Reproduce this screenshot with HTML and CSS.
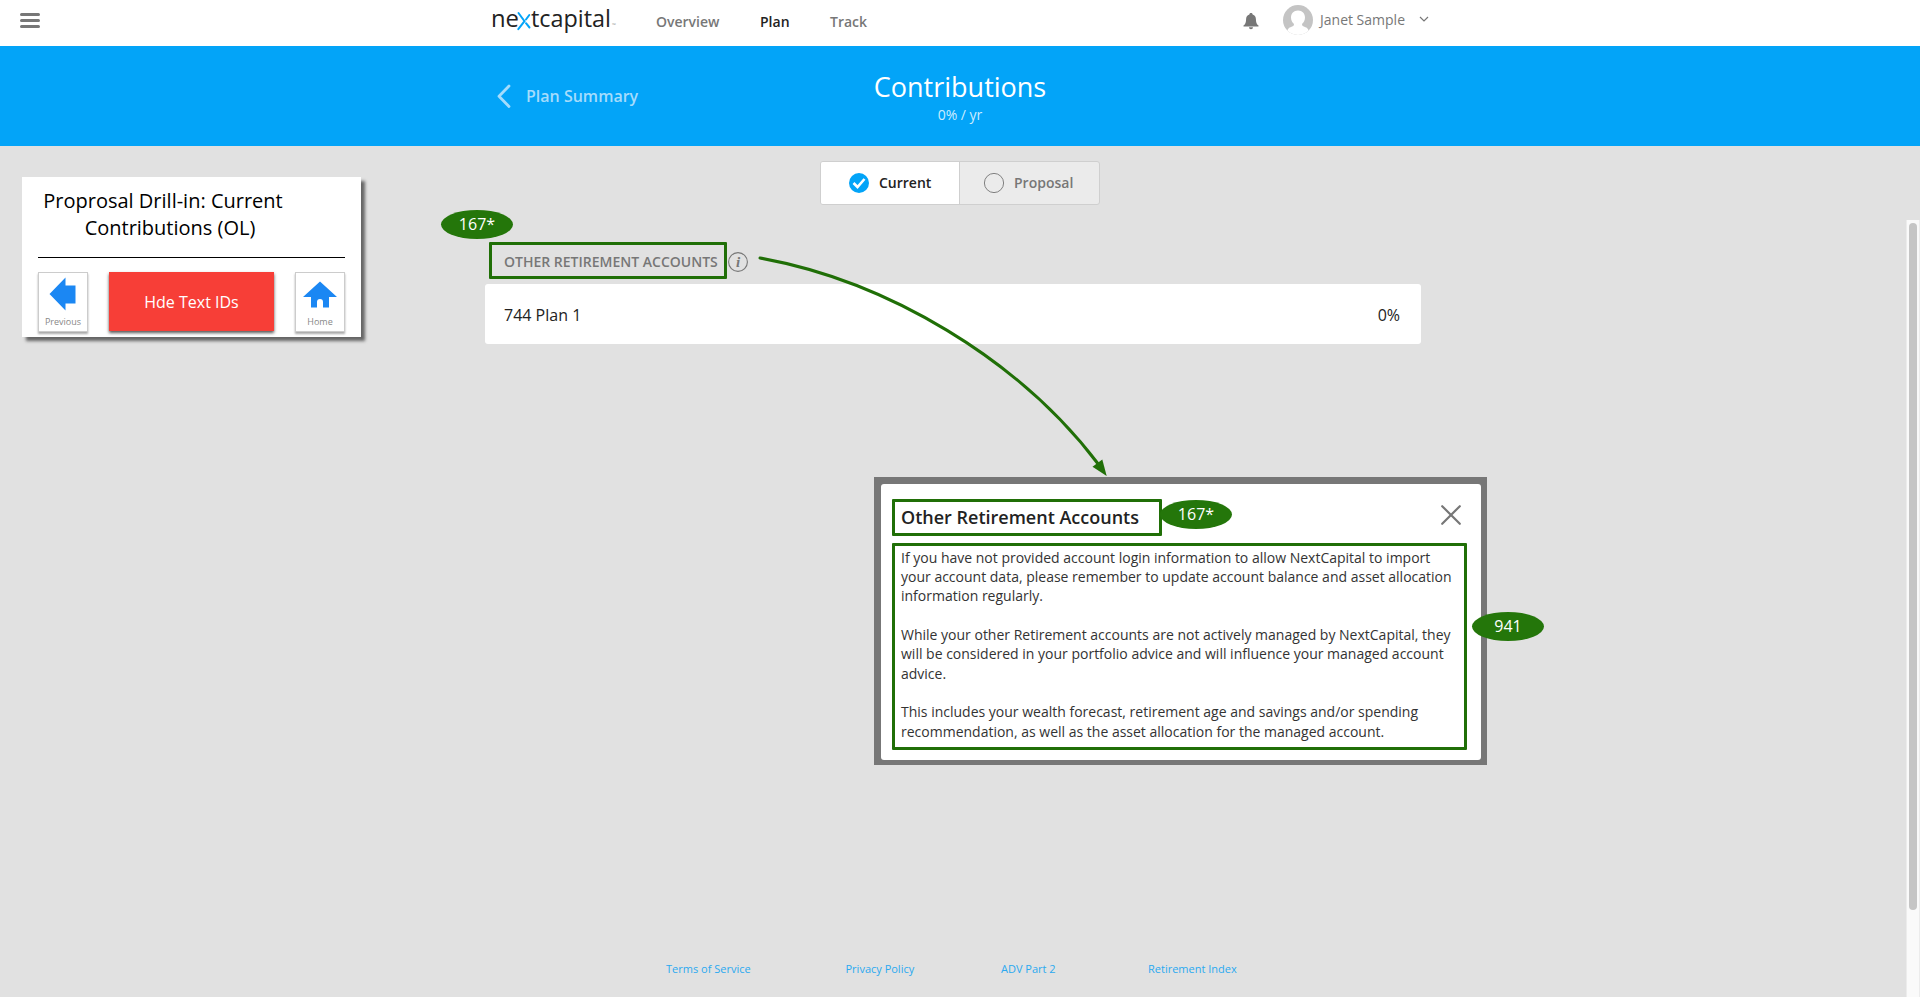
FILE: index.html
```
<!DOCTYPE html>
<html lang="en">
<head>
<meta charset="utf-8">
<title>Contributions</title>
<link rel="stylesheet" href="styles.css">
</head>
<body>
<div class="page">
  <header class="topbar">
    <svg class="menu" width="20" height="16" viewBox="0 0 20 16"><path d="M1.500 1.500h17M1.500 7.500h17M1.500 13.500h17" stroke="#777" stroke-width="3" stroke-linecap="round"/></svg>
    <svg class="logo" width="126" height="42" viewBox="0 -5 126 42">
      <text x="0" y="20" textLength="28" lengthAdjust="spacingAndGlyphs">ne</text>
      <path d="M27.500 6l6 8.200l-6.200 8M38.300 8l-3.300 4.500M38.500 20.500l-3.500-4.300" fill="none" stroke="#03a4f8" stroke-width="2" stroke-linecap="round"/>
      <text x="40" y="20" textLength="80" lengthAdjust="spacingAndGlyphs">tcapital</text>
      <text x="121" y="20" class="tm">™</text>
    </svg>
    <nav class="nav"><a class="n1">Overview</a><a class="n2 active">Plan</a><a class="n3">Track</a></nav>
    <div class="user">
      <svg class="bell" width="16" height="17" viewBox="0 0 16 17"><path d="M8 0c1 0 1.600.6 1.600 1.400C12 2 12.800 4 12.900 6c.1 3.500.6 5.300 2.600 6.600v1H.5v-1C2.500 11.300 3 9.500 3.100 6 3.200 4 4 2 6.400 1.400 6.400.6 7 0 8 0zM6 14.300h4c0 1.200-.8 2-2 2s-2-.8-2-2z" fill="#777"/></svg>
      <svg class="avatar" width="30" height="30" viewBox="0 0 30 30"><defs><clipPath id="face"><circle cx="15" cy="15" r="15"/></clipPath></defs><g clip-path="url(#face)"><path d="M0 0h30v30H0z" fill="#c4c4c4"/><path d="M15 5.500c4.300 0 7 3 7 7 0 3-1.300 5-3 6.500 0 2 1 2.300 3.500 3.200 2.300.8 3.500 2.500 4.200 7.800H3.300c.7-5.300 1.900-7 4.200-7.800C10 21.300 11 21 11 19c-1.700-1.500-3-3.500-3-6.500 0-4 2.700-7 7-7z" fill="#fff"/></g></svg>
      <span class="name">Janet Sample</span>
      <svg class="caret" width="10" height="6" viewBox="0 0 10 6"><path d="M1 1l4 4 4-4" fill="none" stroke="#777" stroke-width="1.200"/></svg>
    </div>
  </header>

  <section class="hero">
    <a class="back"><svg width="15" height="25" viewBox="0 0 15 25"><path d="M13 2L3 12.300l10 10.200" fill="none" stroke="#a5dcfc" stroke-width="2.800" stroke-linecap="round" stroke-linejoin="round"/></svg><span>Plan Summary</span></a>
    <div class="heading"><h1>Contributions</h1><p>0% / yr</p></div>
  </section>

  <main class="main">
    <div class="toggle">
      <div class="option on"><svg width="22" height="22" viewBox="0 0 22 22"><circle cx="11" cy="11" r="10" fill="#03a4f8"/><path d="M5.500 11l4 4 7-8" fill="none" stroke="#fff" stroke-width="2.600"/></svg><span>Current</span></div>
      <div class="option"><svg width="22" height="22" viewBox="0 0 22 22"><circle cx="11" cy="11" r="9.600" fill="none" stroke="#808080"/></svg><span>Proposal</span></div>
    </div>
    <div class="section-head"><h2 class="marked">OTHER RETIREMENT ACCOUNTS</h2><svg width="20" height="20" viewBox="0 0 20 20"><circle cx="10" cy="10" r="9.400" fill="none" stroke="#777" stroke-width="1.100"/><text x="10" y="15" text-anchor="middle" class="info-i">i</text></svg></div>
    <div class="card"><span>744 Plan 1</span><span>0%</span></div>
    <footer class="footer"><a class="f1">Terms of Service</a><a class="f2">Privacy Policy</a><a class="f3">ADV Part 2</a><a>Retirement Index</a></footer>
  </main>

  <div class="scroll"><div class="thumb"></div></div>

  <aside class="panel">
    <h3>Proprosal Drill-in: Current<br><span class="line-two">Contributions (OL)</span></h3>
    <div class="panel-row">
      <div class="tile"><svg width="50" height="42" viewBox="0 0 50 42"><path d="M11.500 21L27.500 4.500v8h10v18H27.500v7z" fill="#1b87f3"/></svg><span>Previous</span></div>
      <div class="toggle-ids">Hde Text IDs</div>
      <div class="tile"><svg width="50" height="42" viewBox="0 0 50 42"><path d="M25 8.500L42 24H34v10.500H28v-5.500a3 3 0 0 0-6 0v5.500H16V24H8z" fill="#1b87f3"/></svg><span>Home</span></div>
    </div>
  </aside>

  <div class="modal">
    <div class="dialog">
      <div class="dialog-head"><h2>Other Retirement Accounts</h2><svg width="20" height="20" viewBox="0 0 20 20"><path d="M1.200 1.200l17.600 17.600M18.800 1.200L1.200 18.800" stroke="#777" stroke-width="2.200" stroke-linecap="round"/></svg></div>
      <div class="dialog-body">
        <p>If you have not provided account login information to allow NextCapital to import<br>your account data, please remember to update account balance and asset allocation<br>information regularly.</p>
        <p>While your other Retirement accounts are not actively managed by NextCapital, they<br>will be considered in your portfolio advice and will influence your managed account<br>advice.</p>
        <p>This includes your wealth forecast, retirement age and savings and/or spending<br>recommendation, as well as the asset allocation for the managed account.</p>
      </div>
    </div>
  </div>

  <svg class="arrow" width="360" height="230" viewBox="0 0 360 230"><path d="M3 5C130 28 262 106 342 212" fill="none" stroke="#206f07" stroke-width="3" stroke-linecap="round"/><path d="M349.700 223L335.500 213.700l9.800-7.200z" fill="#206f07"/></svg>
  <div class="tag tag-a">167*</div>
  <div class="tag tag-b">167*</div>
  <div class="tag tag-c">941</div>
</div>
</body>
</html>
```
FILE: styles.css
```
* { box-sizing: border-box; }
body { margin: 0; background: #fff; font-family: "Open Sans", "Noto Sans", sans-serif; color: #222; overflow: hidden; }
h1, h2, h3, p { margin: 0; }
svg { display: block; flex: none; }
.page { position: relative; width: 1920px; height: 997px; background: #e1e1e1; display: flex; flex-direction: column; white-space: nowrap; }

.topbar { height: 46px; background: #fff; display: flex; align-items: flex-start; flex: none; }
.menu { margin: 13px 0 0 20px; }
.logo { margin: 2px 0 0 451px; font-family: "Open Sans", sans-serif; font-size: 24.500px; fill: #222; }
.logo .tm { font-size: 5px; fill: #999; }
.nav { display: flex; margin: 12px 0 0 39px; font-size: 14px; line-height: 20px; font-weight: 600; color: #777; }
.nav .active { color: #222; }
.n1 { width: 104px; }
.n2 { width: 70px; }
.n3 { width: 60px; }
.user { display: flex; margin-left: 353px; font-size: 14px; line-height: 20px; color: #777; }
.bell { margin-top: 13px; }
.avatar { margin: 5px 0 0 24px; }
.name { width: 86px; margin: 10px 0 0 7px; }
.caret { margin: 16px 0 0 13px; }

.hero { height: 100px; background: #03a4f8; flex: none; display: flex; color: #fff; }
.back { display: flex; align-items: center; width: 379px; margin-left: 496px; height: 100px; color: #a5dcfc; font-size: 16px; font-weight: 600; }
.back span { margin-left: 15px; }
.heading { width: 170px; display: flex; flex-direction: column; align-items: center; }
.heading h1 { font-size: 27px; line-height: 38px; font-weight: 400; margin-top: 22px; }
.heading p { font-size: 14px; line-height: 18px; color: #cdecfe; }

.main { flex: 1; display: flex; flex-direction: column; padding-top: 15px; }
.toggle { margin-left: 820px; width: 280px; height: 44px; display: flex; border: 1px solid #cfcfcf; border-radius: 3px; background: #ebebeb; overflow: hidden; font-size: 14px; line-height: 20px; font-weight: 600; color: #777; }
.option { width: 139px; display: flex; align-items: center; padding-left: 23px; }
.option span { margin: 0 0 1px 9px; }
.option.on { width: 139px; padding-left: 27px; background: #fff; border-right: 1px solid #cfcfcf; color: #222; }
.section-head { display: flex; align-items: center; gap: 1px; margin: 37px 0 0 489px; }
.section-head svg { margin-top: 2px; }
.marked { width: 238px; height: 37px; border: 3px solid #206f07; border-radius: 1px; padding-left: 12px; font-size: 14px; line-height: 33px; font-weight: 600; color: #777; }
.info-i { font: italic bold 15px "Liberation Serif", serif; fill: #777; }
.card { margin: 5px 0 0 485px; width: 936px; height: 60px; border-radius: 3px; background: #fff; display: flex; align-items: center; justify-content: space-between; padding: 2px 21px 0 19px; font-size: 16px; }
.footer { display: flex; margin: auto 0 20px 666px; font-size: 11px; line-height: 16px; color: #2ba9f0; }
.f1 { width: 179.500px; }
.f2 { width: 155.500px; }
.f3 { width: 147px; }

.scroll { position: absolute; left: 1906px; top: 220px; width: 14px; height: 777px; background: #fafafa; border-left: 1px solid #ececec; border-right: 1px solid #ececec; padding: 3px 2px 0; }
.thumb { width: 8px; height: 687px; border-radius: 4px; background: #c5c5c5; }

.panel { position: absolute; left: 22px; top: 177px; width: 339px; height: 160px; background: #fff; box-shadow: 4px 4px 3px #666; padding: 10px 16px 0; color: #000; }
.panel h3 { font-size: 20px; line-height: 27px; font-weight: 400; text-align: center; padding-right: 57px; height: 71px; width: 307px; border-bottom: 1px solid #000; }
.line-two { padding-left: 14px; }
.panel-row { display: flex; justify-content: space-between; margin-top: 14px; }
.tile { width: 50px; height: 60px; border: 1px solid #ccc; background: #fff; box-shadow: 0 2px 2px #aaa; display: flex; flex-direction: column; align-items: center; font-size: 9px; line-height: 14px; color: #888; }
.toggle-ids { width: 165px; height: 59px; background: #f73e37; box-shadow: 0 2px 3px #555; color: #fff; font-size: 16px; line-height: 61px; text-align: center; }

.modal { position: absolute; left: 874px; top: 477px; width: 613px; height: 288px; background: #777; padding: 7px 6px 5px 7px; }
.dialog { background: #fff; height: 276px; border-radius: 3px; padding: 15px 14px 0 11px; }
.dialog-head { display: flex; justify-content: space-between; }
.dialog-head h2 { width: 270px; height: 37px; border: 3px solid #206f07; border-radius: 1px; padding-left: 6px; font-size: 18px; line-height: 30px; font-weight: 600; }
.dialog-head svg { margin: 6px 6px 0 0; }
.dialog-body { width: 575px; height: 207px; margin-top: 7px; border: 3px solid #206f07; border-radius: 1px; padding: 2px 0 0 6px; font-size: 14px; line-height: 19.200px; color: #333; }
.dialog-body p + p { margin-top: 19.600px; }

.arrow { position: absolute; left: 757px; top: 253px; }
.tag { position: absolute; width: 72px; height: 29px; border-radius: 50%; background: #24760a; color: #fff; font-size: 16px; line-height: 29px; text-align: center; }
.tag-a { left: 441px; top: 210px; }
.tag-b { left: 1160px; top: 500px; }
.tag-c { left: 1472px; top: 612px; }
```
